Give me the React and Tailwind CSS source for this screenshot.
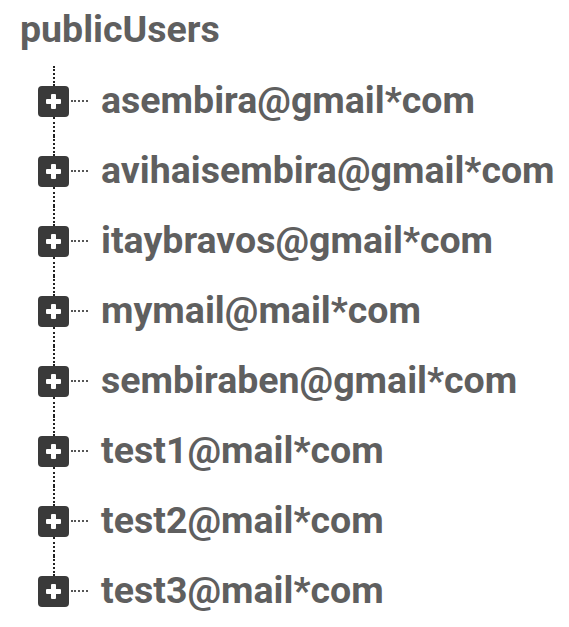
import React from "react"

const users = [
  "asembira@gmail*com",
  "avihaisembira@gmail*com",
  "itaybravos@gmail*com",
  "mymail@mail*com",
  "sembiraben@gmail*com",
  "test1@mail*com",
  "test2@mail*com",
  "test3@mail*com",
]

function PlusBox() {
  return (
    <div className="flex h-[31px] w-[31px] items-center justify-center rounded-[4px] bg-[#3a3a3a]">
      <svg width="15" height="15" viewBox="0 0 15 15">
        <rect x="5" y="0" width="5" height="15" rx="1" fill="#fff" />
        <rect x="0" y="5" width="15" height="5" rx="1" fill="#fff" />
      </svg>
    </div>
  )
}

function TreeRow({ label, last }) {
  return (
    <div className="flex h-[70px] items-center">
      <div className="flex h-full w-[31px] flex-col items-center">
        <div className="h-[20px] w-0 border-l-2 border-dotted border-[#222]" />
        <PlusBox />
        <div className={"h-[19px] w-0 border-l-2 border-dotted " + (last ? "border-transparent" : "border-[#222]")} />
      </div>
      <div className="ml-[2px] w-[17px] border-t-2 border-dotted border-[#555]" />
      <div className="mb-[3px] ml-[13px] text-[37.5px] font-bold leading-[38px] text-[#5f5f5f]">{label}</div>
    </div>
  )
}

export default function App() {
  return (
    <div className="min-h-[627px] bg-white pl-[20px] font-['Roboto',sans-serif]">
      <div className="pt-[9px] text-[37.5px] font-bold leading-[40px] text-[#5f5f5f]">publicUsers</div>
      <div className="mt-[17px] pl-[18px]">
        {users.map((u, i) => (
          <TreeRow key={u} label={u} last={i === users.length - 1} />
        ))}
      </div>
    </div>
  )
}
